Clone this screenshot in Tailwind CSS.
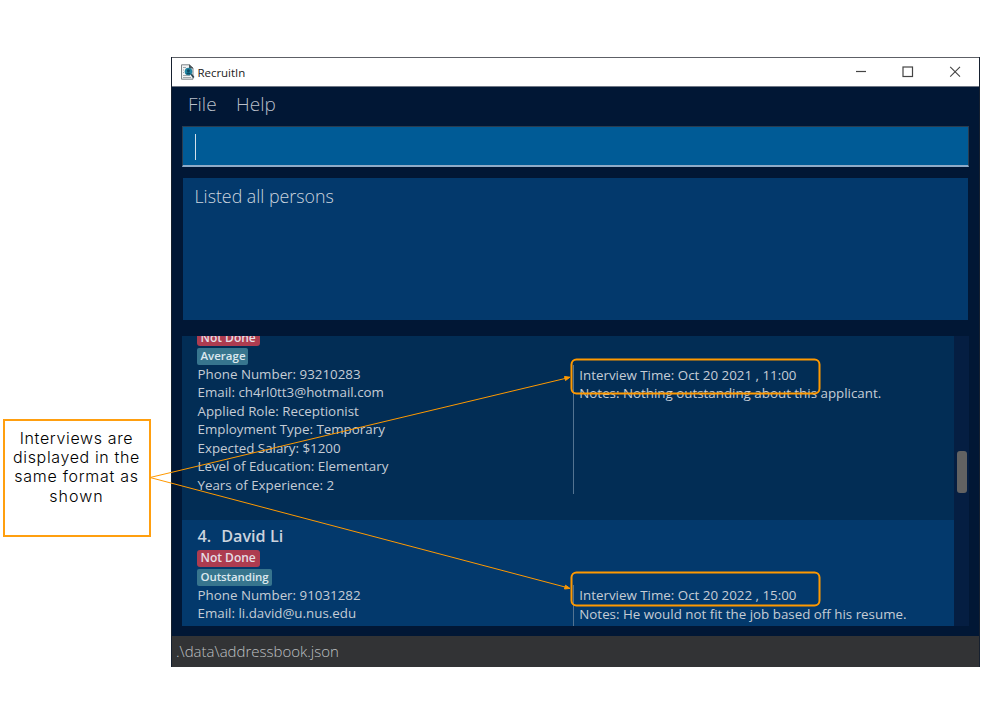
<!DOCTYPE html>
<html lang="en">
<head>
<meta charset="utf-8">
<title>RecruitIn</title>
<script src="https://cdn.jsdelivr.net/npm/@tailwindcss/browser@4"></script>
</head>
<body class="relative h-[711px] w-[985px] overflow-hidden bg-white font-['Open_Sans',sans-serif]">
<main class="ml-[171px] pt-[57px]">
  <div class="flex h-[610px] w-[809px] flex-col border-x border-[#16202f] bg-[#011735]">
    <header class="flex h-[30px] shrink-0 items-center border-t border-b border-t-[#5d6066] border-b-[#6f7785] bg-white pl-[8px]">
      <svg class="h-[16px] w-[15px]" viewBox="0 0 15 16" fill="none">
        <path d="M1.500 .8H9.500L13 4V15.200H1.500Z" fill="#f1f3f4" stroke="#7d8488"/>
        <path d="M9.500 .8V4H13" fill="#4b555a" stroke="#4b555a"/>
        <path d="M3 3.500H6M3 6H4M3 8.500H4M3 11.500H10M3 13.500H11" stroke="#a0a6aa"/>
        <circle cx="8.500" cy="7.500" r="3.800" fill="#2183a0"/>
        <path d="M6.200 10.300C6.400 7.900 10.400 7.900 10.600 10.300Z" fill="#0b4a63"/>
        <circle cx="8.400" cy="6.800" r="1.500" fill="#0b4a63"/>
        <path d="M11.200 10.300L13.800 13.500" stroke="#27414e" stroke-width="1.600"/>
      </svg>
      <h1 class="ml-[2.500px] pt-[1px] text-[11.500px] leading-[16px] text-[#222] tracking-[-0.050px]">RecruitIn</h1>
      <div class="ml-auto flex items-center text-[#444]">
        <svg class="h-[12px] w-[12px]" viewBox="0 0 12 12" stroke="currentColor" fill="none"><path d="M1 5.500H11" stroke-width="1.200"/></svg>
        <svg class="ml-[35px] h-[12px] w-[12px]" viewBox="0 0 12 12" stroke="currentColor" fill="none"><rect x="1" y="1" width="9.500" height="9.500" stroke-width="1.200"/></svg>
        <svg class="ml-[35px] mr-[18px] h-[12px] w-[12px]" viewBox="0 0 12 12" stroke="currentColor" fill="none"><path d="M1.200 .8L11 10.600M11 .8L1.200 10.600" stroke-width="1.100"/></svg>
      </div>
    </header>
    <nav class="flex h-[39px] shrink-0 gap-[19.500px] pl-[16px] pt-[3px] text-[19px] leading-[28px] font-light text-[#b9bfc9]">
      <span>File</span><span>Help</span>
    </nav>
    <div class="ml-[10px] mr-[10px] h-[41px] shrink-0 border border-b-2 border-[#293d50] border-b-[#8fabc8] bg-[#005b96] pl-[12px] pt-[7px]">
      <div class="h-[26px] w-px bg-[#d3e0ea]"></div>
    </div>
    <div class="ml-[11px] mr-[11px] mt-[11px] h-[142px] shrink-0 bg-[#03396c] pl-[11.500px] pt-[5px] text-[17.800px] leading-[26px] font-light text-[#ccd5df]">Listed all persons</div>
    <div class="mx-[10px] mt-[16px] flex h-[290px] shrink-0 overflow-hidden bg-[#051e42]">
      <div class="w-[772px] text-[13.350px] leading-[18.500px] text-[#c5ccd5]">
        <section class="flex h-[184px] bg-[#022d55]">
          <div class="w-[391px] pl-[15px]">
            <div class="-mt-[7px] h-[17px] w-[63px] rounded-[3px] bg-[#ad3c50] pl-[3.500px] text-[12px] leading-[17px] font-semibold text-[#e5dfe5]">Not Done</div>
            <div class="mt-[2px] mb-[-0.400px] h-[17px] w-[51px] rounded-[2px] bg-[#37758e] pl-[3.500px] text-[11.500px] leading-[15px] font-semibold text-[#dce8ee]">Average</div>
            <div class="pl-[0.500px]"><p>Phone Number: 93210283</p><p>Email: ch4rl0tt3@hotmail.com</p><p>Applied Role: Receptionist</p><p>Employment Type: Temporary</p><p>Expected Salary: $1200</p><p>Level of Education: Elementary</p><p>Years of Experience: 2</p></div>
          </div>
          <div class="mt-[29px] h-[129px] border-l border-[#537391] pl-[5.300px] pt-[0.700px]"><p>Interview Time: Oct 20 2021 , 11:00</p><p>Notes: Nothing outstanding about this applicant.</p></div>
        </section>
        <section class="flex h-[106px] bg-[#03396c]">
          <div class="w-[391px] pl-[15px] pt-[5px]">
            <h2 class="flex gap-[10px] pl-[0.500px] text-[16.200px] leading-[23px] font-semibold text-[#ccd3dd]"><span>4.</span><span>David Li</span></h2>
            <div class="mt-[2px] h-[17px] w-[63px] rounded-[3px] bg-[#ad3c50] pl-[3.500px] text-[12px] leading-[16px] font-semibold text-[#e5dfe5]">Not Done</div>
            <div class="mt-[2px] mb-[-0.400px] h-[17px] w-[75px] rounded-[2px] bg-[#37758e] pl-[3.500px] text-[11.500px] leading-[15px] font-semibold tracking-[-0.100px] text-[#dce8ee]">Outstanding</div>
            <div class="pl-[0.500px]"><p>Phone Number: 91031282</p><p>Email: li.david@u.nus.edu</p></div>
          </div>
          <div class="mt-[65px] border-l border-[#537391] pl-[5.300px] pt-[1px]"><p>Interview Time: Oct 20 2022 , 15:00</p><p>Notes: He would not fit the job based off his resume.</p></div>
        </section>
      </div>
      <div class="flex-1 pl-[3px] pt-[115px]"><div class="h-[42px] w-[10px] rounded-[3px] bg-[#626262]"></div></div>
    </div>
    <footer class="mt-auto h-[31px] shrink-0 bg-[#323335] pl-[4px] pt-[4px] text-[15px] leading-[22px] font-light text-[#bfc0c2]">.\data\addressbook.json</footer>
  </div>
</main>
<aside class="absolute left-[2.500px] top-[418.500px] h-[118px] w-[148px] border-2 border-[#ff9f0f] bg-white pt-[8.500px] text-center font-['Inter',sans-serif] text-[16px] leading-[19.200px] font-light text-black">
  <p class="tracking-[0.650px]">Interviews are</p><p class="tracking-[0.640px]">displayed in the</p><p class="tracking-[0.720px]">same format as</p><p class="tracking-[1px]">shown</p>
</aside>
<svg class="absolute left-0 top-0 h-[711px] w-[985px]" viewBox="0 0 985 711" fill="none" stroke="#ff9900">
  <path d="M150 477.500L565 378.500M150 477.500L565 587" stroke-width="1"/>
  <path d="M570 377.200L564.500 376.500L565.500 380.500Z M570 588.400L565.500 585.200L564.500 589Z" fill="#ff9900" stroke-width="1"/>
  <rect x="571.500" y="359.500" width="248" height="34" rx="5" stroke-width="2"/>
  <rect x="571.500" y="572.500" width="248" height="33" rx="5" stroke-width="2"/>
</svg>
</body>
</html>
